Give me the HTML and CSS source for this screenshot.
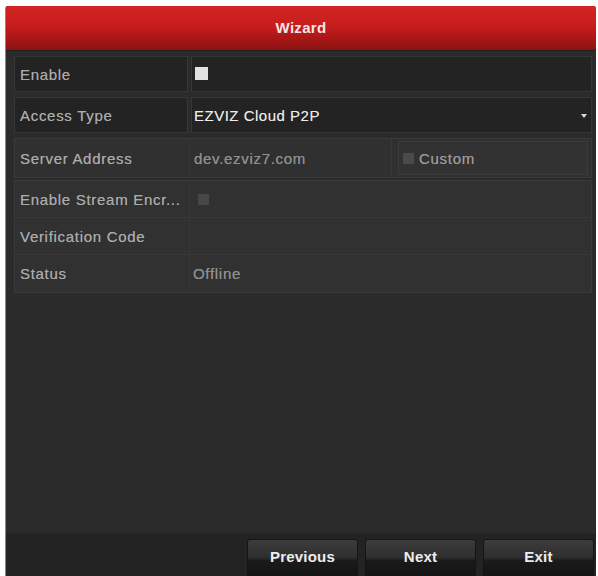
FILE: index.html
```html
<!DOCTYPE html>
<html>
<head>
<meta charset="utf-8">
<link rel="stylesheet" href="styles.css">
</head>
<body>
<div class="dialog">
  <div class="header">Wizard</div>
  <div class="rows">
    <div class="row active">
      <div class="label">Enable</div>
      <div class="value"><span class="check on"></span></div>
    </div>
    <div class="row active">
      <div class="label">Access Type</div>
      <div class="value bright">EZVIZ Cloud P2P<span class="arrow"></span></div>
    </div>
    <div class="row server">
      <div class="label">Server Address</div>
      <div class="value split">
        <div class="part">dev.ezviz7.com</div>
        <div class="part custom"><span class="check off"></span>Custom</div>
      </div>
    </div>
    <div class="group">
      <div class="row plain">
        <div class="label">Enable Stream Encr...</div>
        <div class="value"><span class="check dim"></span></div>
      </div>
      <div class="row plain">
        <div class="label">Verification Code</div>
        <div class="value"></div>
      </div>
      <div class="row plain">
        <div class="label">Status</div>
        <div class="value">Offline</div>
      </div>
    </div>
  </div>
  <div class="spacer"></div>
  <div class="footer">
    <button class="btn">Previous</button>
    <button class="btn">Next</button>
    <button class="btn">Exit</button>
  </div>
</div>
</body>
</html>
```
FILE: styles.css
```css
html, body {
  margin: 0;
  padding: 0;
  background: #ffffff;
}
body {
  font-family: "Liberation Sans", Arial, sans-serif;
  font-size: 15px;
  letter-spacing: 0.7px;
}
.dialog {
  margin: 6px 2px 0 5px;
  width: 591px;
  height: 570px;
  background: #2b2b2b;
  border-left: 1px solid #8a8a8a;
  box-sizing: border-box;
  display: flex;
  flex-direction: column;
  border-radius: 3px 3px 0 0;
  overflow: hidden;
}
.header {
  height: 44px;
  flex: none;
  background: linear-gradient(#d42424 0%, #c81c1c 45%, #8c1212 100%);
  color: #f4e6e6;
  text-align: center;
  line-height: 44px;
  font-size: 15px;
  font-weight: bold;
  letter-spacing: 0.3px;
  border-bottom: 1px solid #1e1e1e;
}
.rows {
  padding: 5px 4px 0 8px;
  display: flex;
  flex-direction: column;
  gap: 5px;
}
.row {
  display: flex;
  height: 36px;
  box-sizing: border-box;
  color: #ababab;
  text-shadow: 0 0 0.6px rgba(200, 200, 200, 0.6);
}
.label {
  width: 174px;
  flex: none;
  padding-left: 5px;
  display: flex;
  align-items: center;
  box-sizing: border-box;
  white-space: nowrap;
}
.value {
  flex: 1;
  display: flex;
  align-items: center;
  padding-left: 3px;
  position: relative;
  color: #8e8e8e;
}
.row.active .label,
.row.active .value {
  background: #232323;
  border: 1px solid #363636;
}
.row.active .value {
  margin-left: 3px;
  padding-left: 2px;
}
.value.bright {
  color: #ececec;
  letter-spacing: 0.5px;
}
.arrow {
  position: absolute;
  right: 4px;
  top: 16px;
  width: 0;
  height: 0;
  border-left: 3px solid transparent;
  border-right: 3px solid transparent;
  border-top: 4px solid #d8d8d8;
}
.row.server {
  height: 40px;
  background: #303030;
  border: 1px solid #3a3a3a;
}
.row.server .value {
  padding-left: 0;
  border-left: 1px solid #363636;
}
.value.split {
  display: flex;
  align-items: stretch;
  gap: 6px;
}
.part {
  display: flex;
  align-items: center;
  padding-left: 4px;
}
.part:first-child {
  width: 197px;
  border-right: 1px solid #383838;
}
.part.custom {
  flex: 1;
  margin: 2px 3px 2px 0;
  background: #323232;
  border: 1px solid #3c3c3c;
  color: #9a9a9a;
}
.group {
  margin-top: -3px;
  background: #313131;
  border: 1px solid #3a3a3a;
}
.row.plain {
  height: 37px;
  border-bottom: 1px solid #383838;
}
.row.plain:last-child {
  border-bottom: none;
}
.row.plain .value {
  border-left: 1px solid #363636;
}
.check {
  display: inline-block;
  width: 12px;
  height: 12px;
}
.check.on {
  background: #e2e2e2;
  width: 13px;
  height: 13px;
  margin-left: 1px;
  margin-top: -1px;
}
.check.dim {
  background: #474747;
  width: 11px;
  height: 11px;
  margin-left: 5px;
}
.check.off {
  background: #4a4a4a;
  width: 11px;
  height: 11px;
  margin-right: 5px;
}
.spacer {
  flex: 1;
}
.footer {
  height: 43px;
  flex: none;
  background: #232323;
  border-top: 1px solid #262626;
  display: flex;
  justify-content: flex-end;
  align-items: flex-start;
  padding: 5px 2px 0 0;
  gap: 7px;
  box-sizing: border-box;
}
.btn {
  width: 111px;
  height: 40px;
  border: 1px solid #151515;
  border-radius: 3px;
  background: linear-gradient(#3c3c3c 0%, #2f2f2f 45%, #1a1a1a 55%, #141414 100%);
  color: #ededed;
  font-family: "Liberation Sans", Arial, sans-serif;
  font-size: 15px;
  font-weight: bold;
  letter-spacing: 0.2px;
  padding: 0 0 6px 0;
}
```
